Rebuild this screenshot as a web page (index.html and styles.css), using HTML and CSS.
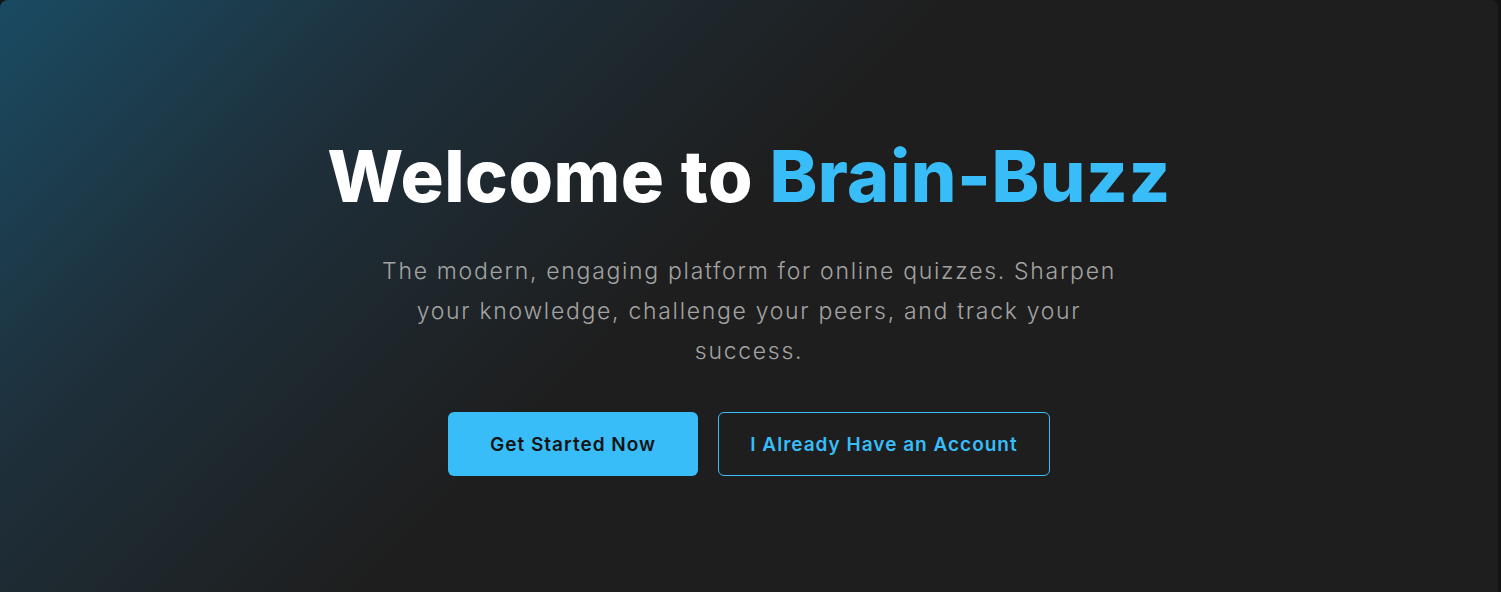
FILE: index.html
```html
<!DOCTYPE html>
<html lang="en">
<head>
<meta charset="utf-8">
<title>Brain-Buzz</title>
<link rel="stylesheet" href="styles.css">
</head>
<body>
<main class="hero">
  <h1 class="title">Welcome to <span class="brand">Brain-Buzz</span></h1>
  <p class="lead">The modern, engaging platform for online quizzes. Sharpen your knowledge, challenge your peers, and track your success.</p>
  <div class="actions">
    <a class="btn btn-primary" href="#">Get Started Now</a>
    <a class="btn btn-outline" href="#">I Already Have an Account</a>
  </div>
</main>
</body>
</html>
```
FILE: styles.css
```css
html, body {
  margin: 0;
  height: 100%;
  overflow: hidden;
  background: #141414;
}
body {
  font-family: "Inter", "DejaVu Sans", sans-serif;
}
.hero {
  box-sizing: border-box;
  width: 1498px;
  height: 620px;
  border-radius: 8px;
  background: linear-gradient(135deg, #1a4b62 0%, #1e2f3a 22%, #1e1e1e 45%, #1e1e1e 100%);
  display: flex;
  flex-direction: column;
  align-items: center;
  padding-top: 134px;
  text-align: center;
}
.title {
  margin: 0;
  font-size: 72px;
  font-weight: 800;
  line-height: 84px;
  color: #ffffff;
  letter-spacing: 0.5px;
}
.brand {
  color: #38bdf8;
}
.lead {
  margin: 33px 0 0;
  max-width: 770px;
  font-size: 23px;
  font-weight: 300;
  line-height: 40px;
  letter-spacing: 1.7px;
  color: #a3a3a3;
}
.actions {
  display: flex;
  gap: 20px;
  margin-top: 41px;
}
.btn {
  box-sizing: border-box;
  display: flex;
  align-items: center;
  justify-content: center;
  height: 64px;
  border-radius: 6px;
  font-size: 19px;
  font-weight: 600;
  letter-spacing: 1px;
  text-decoration: none;
}
.btn-primary {
  width: 250px;
  background: #38bdf8;
  color: #141414;
}
.btn-outline {
  width: 332px;
  border: 1px solid #38bdf8;
  color: #38bdf8;
}
```
